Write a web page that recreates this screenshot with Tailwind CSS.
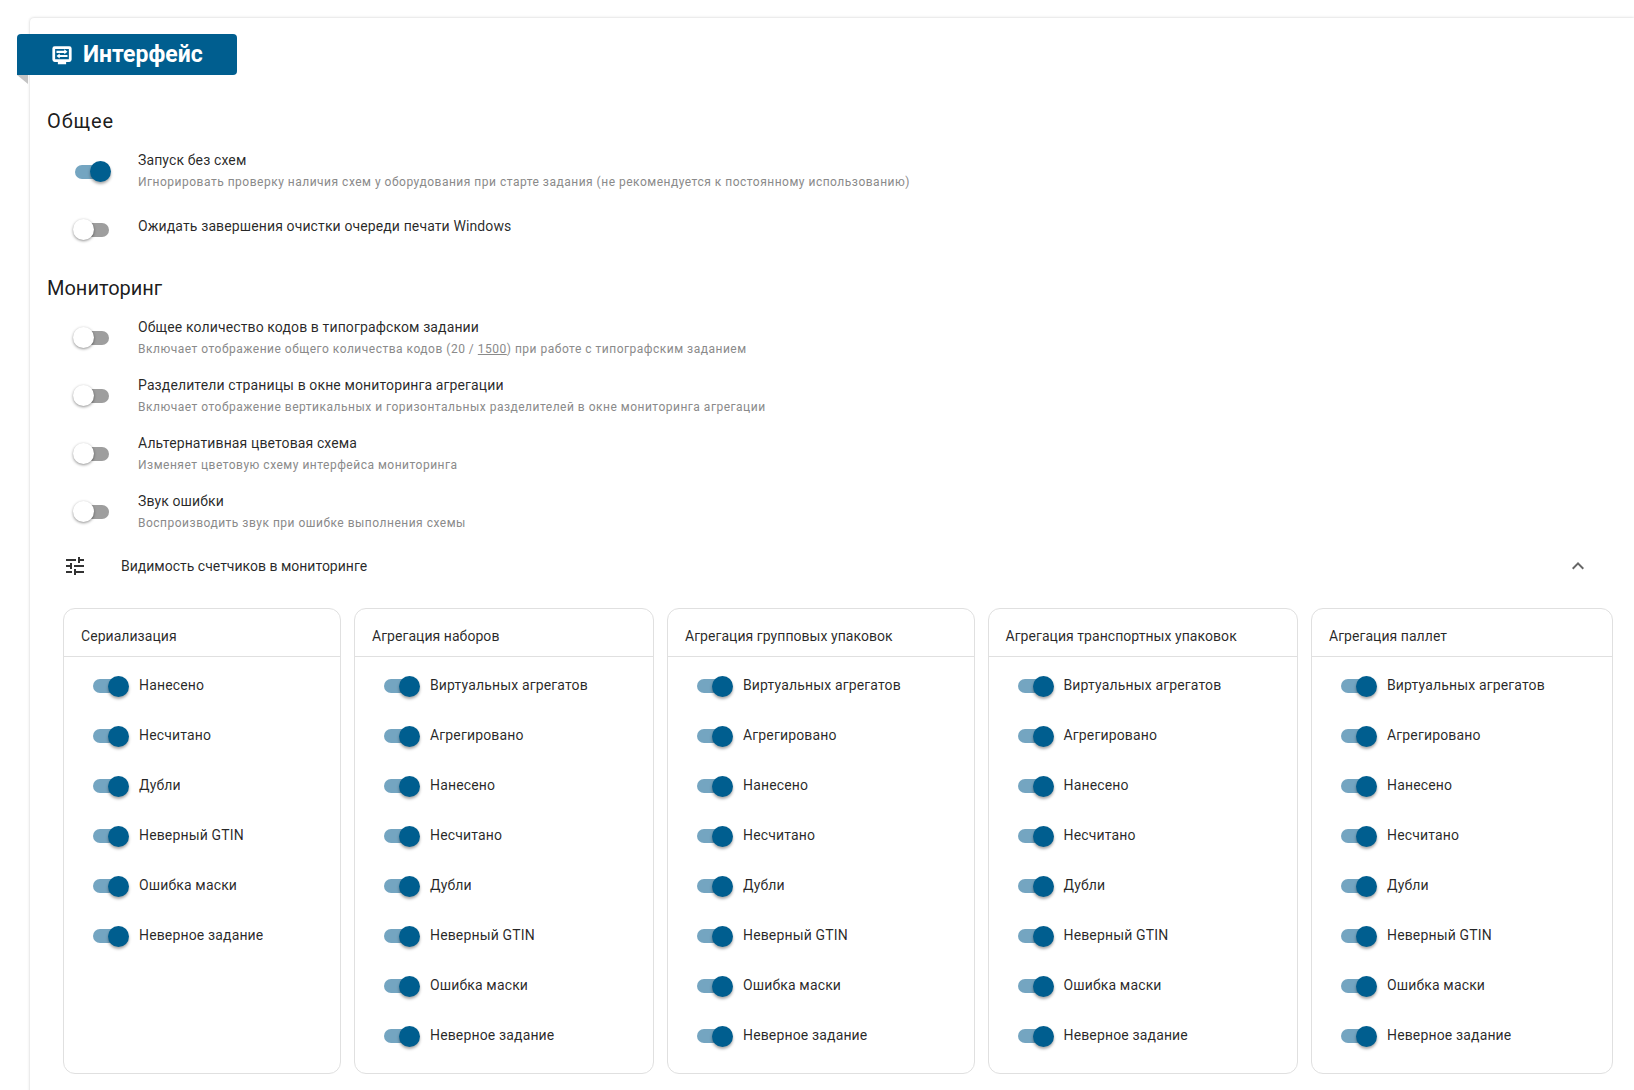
<!DOCTYPE html>
<html lang="ru">
<head>
  <meta charset="UTF-8">
  <title>Интерфейс</title>
  <script src="https://cdn.jsdelivr.net/npm/@tailwindcss/browser@4"></script>
</head>
<body class="bg-white font-['Roboto',sans-serif] text-[14px] text-black/85 overflow-hidden">
  <div class="h-[1090px] overflow-hidden pt-[18px] pl-[30px]">
    <div class="h-[1200px] bg-white rounded-tl-[4px] shadow-[0_0_3px_rgba(0,0,0,0.22)]">
      <!-- ribbon -->
      <div class="pt-[16px] -ml-[13px]">
        <div class="w-[220px] h-[41px] bg-[#005e8f] rounded-r-[4px] rounded-tl-[4px] flex items-center pl-[34px] gap-[10px] text-white">
          <svg class="w-[22px] h-[22px]" viewBox="0 0 24 24" fill="currentColor"><path fill-rule="evenodd" d="M4 2.5h16A2.5 2.5 0 0 1 22.5 5v12a2.5 2.5 0 0 1-2.5 2.5h-3.5V22h-9v-2.5H4A2.5 2.5 0 0 1 1.500 17V5A2.5 2.5 0 0 1 4 2.500zM4.500 5.500v11h15v-11h-15zM6 7.300h8.500V5.800l3.500 2.700-3.500 2.700V9.700H6V7.300zm12 7H9.500v1.500L6 13.100l3.500-2.700v1.500H18v2.400z"/></svg>
          <span class="text-[23px] leading-none font-bold">Интерфейс</span>
        </div>
        <div class="w-0 h-0 border-t-[9px] border-t-[#c4c4c4] border-l-[11px] border-l-transparent"></div>
      </div>

      <div class="pl-[17px] pt-[23px]">
        <h2 class="text-[20px] leading-[28px] font-normal text-black/90 tracking-[0.9px]">Общее</h2>
        <div id="general" class="-ml-[1px] mt-[14px]"></div>
        <h2 class="text-[20px] leading-[28px] font-normal text-black/90 mt-[1px]">Мониторинг</h2>
        <div id="monitoring" class="-ml-[1px] mt-[14px]"></div>
      </div>

      <div class="flex items-center h-[44px] -mt-[4px] pl-[33px] pr-[44px]">
        <svg class="w-[24px] h-[24px] text-[#333]" viewBox="0 0 24 24" fill="currentColor"><path d="M3 17v2h6v-2H3zM3 5v2h10V5H3zm10 16v-2h8v-2h-8v-2h-2v6h2zM7 9v2H3v2h4v2h2V9H7zm14 4v-2H11v2h10zm-6-4h2V7h4V5h-4V3h-2v6z"/></svg>
        <span class="ml-[34px] text-[14px]">Видимость счетчиков в мониторинге</span>
        <svg class="ml-auto w-[24px] h-[24px] text-[#666]" viewBox="0 0 24 24" fill="currentColor"><path d="M12 8l-6 6 1.41 1.41L12 10.83l4.59 4.58L18 14z"/></svg>
      </div>

      <div id="cards" class="flex gap-[13px] pl-[33px] mt-[20px]"></div>
    </div>
  </div>

  <script>
    const thumbOn = '<span class="flex items-center w-[36px] h-[21px] shrink-0"><span class="w-[34px] h-[14px] rounded-full bg-[#74a5c1] shrink-0"></span><span class="w-[21px] h-[21px] rounded-full bg-[#005e8f] -ml-[19px] shrink-0 shadow-[0_2px_3px_rgba(0,0,0,0.35)]"></span></span>';
    const thumbOff = '<span class="flex items-center w-[36px] h-[21px] shrink-0"><span class="w-[21px] h-[21px] rounded-full bg-white shadow-[0_1px_3px_rgba(0,0,0,0.45)] relative z-10 shrink-0"></span><span class="w-[32px] h-[14px] rounded-full bg-[#9e9e9e] -ml-[17px] shrink-0"></span></span>';

    // rowClass sets the row height, toggleClass the toggle's offset inside it
    function settingRow(on, rowClass, toggleClass, title, desc, htmlDesc) {
      return `<div class="flex ${rowClass}">
        <div class="w-[92px] ${toggleClass}">${on ? thumbOn : thumbOff}</div>
        <div>
          <div class="leading-[20px] pt-[1px] tracking-[0.12px]">${title}</div>
          ${desc ? `<div class="text-[12px] leading-[20px] text-[#8a8a8a] tracking-[0.5px] mt-[2px]">${htmlDesc || desc}</div>` : ''}
        </div>
      </div>`;
    }

    document.getElementById('general').innerHTML =
      settingRow(true, 'h-[66px]', 'pl-[29px] pt-[12px]', 'Запуск без схем', 'Игнорировать проверку наличия схем у оборудования при старте задания (не рекомендуется к постоянному использованию)') +
      settingRow(false, 'h-[58px]', 'pl-[27px] pt-[4px]', 'Ожидать завершения очистки очереди печати Windows');

    document.getElementById('monitoring').innerHTML =
      settingRow(false, 'h-[58px]', 'pl-[27px] pt-[11px]', 'Общее количество кодов в типографском задании', 'x', 'Включает отображение общего количества кодов (20 / <u>1500</u>) при работе с типографским заданием') +
      settingRow(false, 'h-[58px]', 'pl-[27px] pt-[11px]', 'Разделители страницы в окне мониторинга агрегации', 'Включает отображение вертикальных и горизонтальных разделителей в окне мониторинга агрегации') +
      settingRow(false, 'h-[58px]', 'pl-[27px] pt-[11px]', 'Альтернативная цветовая схема', 'Изменяет цветовую схему интерфейса мониторинга') +
      settingRow(false, 'h-[58px]', 'pl-[27px] pt-[11px]', 'Звук ошибки', 'Воспроизводить звук при ошибке выполнения схемы');

    const aggregation = ['Виртуальных агрегатов', 'Агрегировано', 'Нанесено', 'Несчитано', 'Дубли', 'Неверный GTIN', 'Ошибка маски', 'Неверное задание'];
    const cards = [
      ['Сериализация', 'w-[278px]', ['Нанесено', 'Несчитано', 'Дубли', 'Неверный GTIN', 'Ошибка маски', 'Неверное задание']],
      ['Агрегация наборов', 'w-[300px]', aggregation],
      ['Агрегация групповых упаковок', 'w-[307.5px]', aggregation],
      ['Агрегация транспортных упаковок', 'w-[310.5px]', aggregation],
      ['Агрегация паллет', 'w-[302px]', aggregation],
    ];

    document.getElementById('cards').innerHTML = cards.map(([title, width, items]) => `
      <div class="${width} h-[466px] shrink-0 border border-[#e0e0e0] rounded-[12px]">
        <div class="h-[48px] border-b border-[#e0e0e0] flex items-center pl-[17px] pt-[8px] tracking-[0.05px]">${title}</div>
        <div class="pt-[3px]">
          ${items.map(item => `<div class="flex items-center h-[50px] pl-[29px] gap-[10px] tracking-[0.15px]"><span class="mt-[2px]">${thumbOn}</span><span>${item}</span></div>`).join('')}
        </div>
      </div>`).join('');
  </script>
</body>
</html>
